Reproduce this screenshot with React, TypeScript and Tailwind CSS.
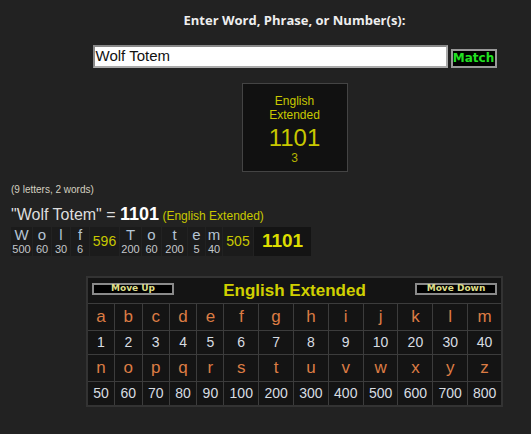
import React from "react";

const top1 = ["a","b","c","d","e","f","g","h","i","j","k","l","m"];
const num1 = ["1","2","3","4","5","6","7","8","9","10","20","30","40"];
const top2 = ["n","o","p","q","r","s","t","u","v","w","x","y","z"];
const num2 = ["50","60","70","80","90","100","200","300","400","500","600","700","800"];
const colW = [27,28,27,28,27,35,35,35,35,35,35,35,35];

type BCell = { l?: string; n?: string; w: number; sum?: string; total?: boolean };
const breakdown: BCell[] = [
  { l: "W", n: "500", w: 21 },
  { l: "o", n: "60", w: 18 },
  { l: "l", n: "30", w: 18 },
  { l: "f", n: "6", w: 18 },
  { sum: "596", w: 29 },
  { l: "T", n: "200", w: 21 },
  { l: "o", n: "60", w: 19 },
  { l: "t", n: "200", w: 25 },
  { l: "e", n: "5", w: 17 },
  { l: "m", n: "40", w: 16 },
  { sum: "505", w: 30 },
  { sum: "1101", w: 57, total: true },
];

export default function App() {
  return (
    <div className="w-[531px] h-[434px] overflow-hidden bg-[#222222] font-['Liberation_Sans',Arial,sans-serif]">
      <div className="pl-[58px] flex flex-col items-center">
        <div className="pt-[10px] h-[45px] text-[13px] leading-[20px] font-bold text-[#eeeeee] font-['Open_Sans',sans-serif]">
          Enter Word, Phrase, or Number(s):
        </div>
        <div className="flex items-center gap-[3px] h-[23px]">
          <div className="w-[355px] h-[23px] bg-white border-2 border-t-[#888] border-l-[#888] border-b-[#aaa] border-r-[#aaa] flex items-center pl-[1px] text-[15px] text-[#111]">
            Wolf Totem
          </div>
          <div className="mt-[3px] w-[46px] h-[19px] bg-black border-2 border-[#999] flex items-center justify-center text-[12px] font-bold text-[#22e022] font-['DejaVu_Sans',Verdana,sans-serif]">
            Match
          </div>
        </div>
        <div className="mt-[15px] w-[106px] h-[89px] bg-[#111111] border border-[#444] flex flex-col items-center pt-[10px] text-[#c8c800]">
          <div className="text-[12px] leading-[14px]">English</div>
          <div className="text-[12px] leading-[14px]">Extended</div>
          <div className="text-[24px] leading-[26px] mt-[3px]">1101</div>
          <div className="text-[12px] leading-[14px] text-[#b4b400]">3</div>
        </div>
      </div>

      <div className="pl-[11px] pt-[12px]">
        <div className="text-[10px] leading-[12px] text-[#d4d0c0]">(9 letters, 2 words)</div>
        <div className="mt-[8px] flex items-baseline h-[20px] leading-[20px]">
          <span className="text-[16px] text-[#dddddd]">"Wolf Totem" =&nbsp;</span>
          <span className="text-[18px] font-bold text-white">1101</span>
          <span className="text-[12px] text-[#c8c800]">&nbsp;(English Extended)</span>
        </div>
        <div className="mt-[3px] flex h-[29px] gap-px bg-[#222]">
          {breakdown.map((c, i) =>
            c.sum ? (
              <div
                key={i}
                style={{ width: c.w }}
                className={
                  c.total
                    ? "bg-[#141414] flex items-center justify-center text-[19px] font-bold text-[#dddd00]"
                    : "bg-[#1b1b1b] flex items-center justify-center text-[14px] text-[#c8c800]"
                }
              >
                {c.sum}
              </div>
            ) : (
              <div key={i} style={{ width: c.w }} className="bg-[#1b1b1b] flex flex-col items-center">
                <div className="text-[15px] leading-[16px] text-[#b4c4d4]">{c.l}</div>
                <div className="text-[11px] leading-[13px] text-[#c4c8cc]">{c.n}</div>
              </div>
            )
          )}
        </div>
      </div>

      <div className="pl-[86px] pt-[20px]">
        <div className="w-[417px] bg-[#141414] border-2 border-[#333]">
          <div className="h-[26px] flex items-center justify-between px-[4px] border-b border-[#3c3c3c] relative">
            <div className="mt-[-3px] w-[82px] h-[12px] bg-black border-2 border-[#8a8a8a] flex items-center justify-center text-[9px] font-bold text-[#dede88] font-['DejaVu_Sans',Verdana,sans-serif]">
              Move Up
            </div>
            <div className="text-[17px] font-bold text-[#d0d000]">English Extended</div>
            <div className="mt-[-3px] w-[82px] h-[12px] bg-black border-2 border-[#8a8a8a] flex items-center justify-center text-[9px] font-bold text-[#dede88] font-['DejaVu_Sans',Verdana,sans-serif]">
              Move Down
            </div>
          </div>
          {[
            { cells: top1, letter: true },
            { cells: num1, letter: false },
            { cells: top2, letter: true },
            { cells: num2, letter: false },
          ].map((row, ri) => (
            <div key={ri} className={"flex " + (ri < 3 ? "border-b border-[#3c3c3c]" : "")}>
              {row.cells.map((t, ci) => (
                <div
                  key={ci}
                  style={{ width: colW[ci] - (ci === 12 ? 2 : 0) }}
                  className={
                    (ci < 12 ? "border-r border-[#3c3c3c] " : "") +
                    (row.letter
                      ? "h-[26px] flex items-center justify-center text-[17px] text-[#dc7c44]"
                      : "h-[23px] flex items-center justify-center text-[14px] text-[#d8dde2]")
                  }
                >
                  {t}
                </div>
              ))}
            </div>
          ))}
        </div>
      </div>
    </div>
  );
}
